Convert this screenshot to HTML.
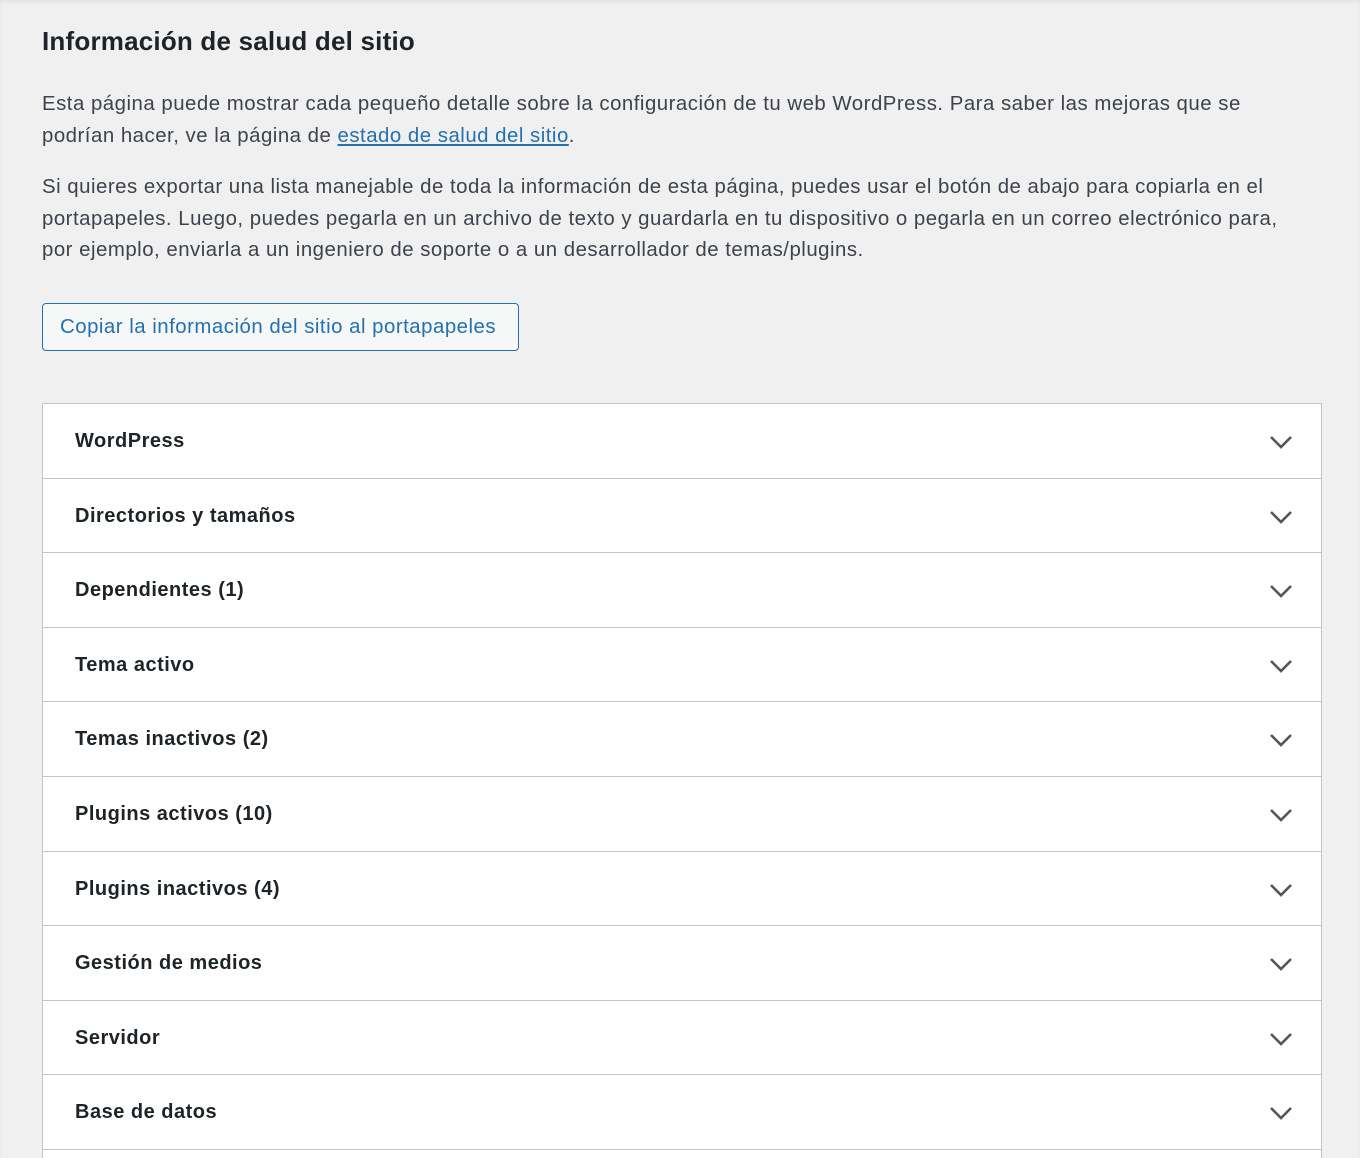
<!DOCTYPE html>
<html><head><meta charset="utf-8"><style>
*{margin:0;padding:0;box-sizing:border-box}
html,body{width:1360px;height:1158px;overflow:hidden}
body{background:#f0f0f1;font-family:"Liberation Sans",sans-serif;color:#3c434a;position:relative;box-shadow:inset 0 2px 3px rgba(0,0,0,0.06)}
h1{position:absolute;left:42px;top:26px;font-size:26px;font-weight:600;color:#1d2327;letter-spacing:0.2px}
p{position:absolute;left:42px;width:1260px;font-size:20.4px;line-height:31.5px;color:#3c434a;letter-spacing:0.5px}
a{color:#2271b1;text-decoration:underline}
.btn{position:absolute;left:42px;top:303px;width:477px;height:48px;border:1px solid #2271b1;border-radius:4px;background:#f6f7f7;color:#2271b1;font-size:20.4px;line-height:47px;padding-left:17px;white-space:nowrap;letter-spacing:0.5px}
.box{position:absolute;left:42px;top:403px;width:1280px;height:800px;background:#fff;border:1px solid #c3c4c7;border-bottom:none}
.row{height:74.6px;border-bottom:1px solid #c3c4c7;position:relative;font-size:20px;font-weight:700;color:#1d2327;padding-left:32px;line-height:75px;letter-spacing:0.5px}
.row svg{position:absolute;right:28px;top:31px}
</style></head><body>
<h1>Información de salud del sitio</h1>
<p style="top:89px">Esta página puede mostrar cada pequeño detalle sobre la configuración de tu web WordPress. Para saber las mejoras que se podrían hacer, ve la página de <a>estado de salud del sitio</a>.</p>
<p style="top:172px">Si quieres exportar una lista manejable de toda la información de esta página, puedes usar el botón de abajo para copiarla en el portapapeles. Luego, puedes pegarla en un archivo de texto y guardarla en tu dispositivo o pegarla en un correo electrónico para, por ejemplo, enviarla a un ingeniero de soporte o a un desarrollador de temas/plugins.</p>
<div class="btn">Copiar la información del sitio al portapapeles</div>
<div class="box">
<div class="row">WordPress<svg width="24" height="14" viewBox="0 0 24 14"><path d="M2 2l10 10 10-10" fill="none" stroke="#50575e" stroke-width="2.6"/></svg></div>
<div class="row">Directorios y tamaños<svg width="24" height="14" viewBox="0 0 24 14"><path d="M2 2l10 10 10-10" fill="none" stroke="#50575e" stroke-width="2.6"/></svg></div>
<div class="row">Dependientes (1)<svg width="24" height="14" viewBox="0 0 24 14"><path d="M2 2l10 10 10-10" fill="none" stroke="#50575e" stroke-width="2.6"/></svg></div>
<div class="row">Tema activo<svg width="24" height="14" viewBox="0 0 24 14"><path d="M2 2l10 10 10-10" fill="none" stroke="#50575e" stroke-width="2.6"/></svg></div>
<div class="row">Temas inactivos (2)<svg width="24" height="14" viewBox="0 0 24 14"><path d="M2 2l10 10 10-10" fill="none" stroke="#50575e" stroke-width="2.6"/></svg></div>
<div class="row">Plugins activos (10)<svg width="24" height="14" viewBox="0 0 24 14"><path d="M2 2l10 10 10-10" fill="none" stroke="#50575e" stroke-width="2.6"/></svg></div>
<div class="row">Plugins inactivos (4)<svg width="24" height="14" viewBox="0 0 24 14"><path d="M2 2l10 10 10-10" fill="none" stroke="#50575e" stroke-width="2.6"/></svg></div>
<div class="row">Gestión de medios<svg width="24" height="14" viewBox="0 0 24 14"><path d="M2 2l10 10 10-10" fill="none" stroke="#50575e" stroke-width="2.6"/></svg></div>
<div class="row">Servidor<svg width="24" height="14" viewBox="0 0 24 14"><path d="M2 2l10 10 10-10" fill="none" stroke="#50575e" stroke-width="2.6"/></svg></div>
<div class="row">Base de datos<svg width="24" height="14" viewBox="0 0 24 14"><path d="M2 2l10 10 10-10" fill="none" stroke="#50575e" stroke-width="2.6"/></svg></div>
</div>
</body></html>
